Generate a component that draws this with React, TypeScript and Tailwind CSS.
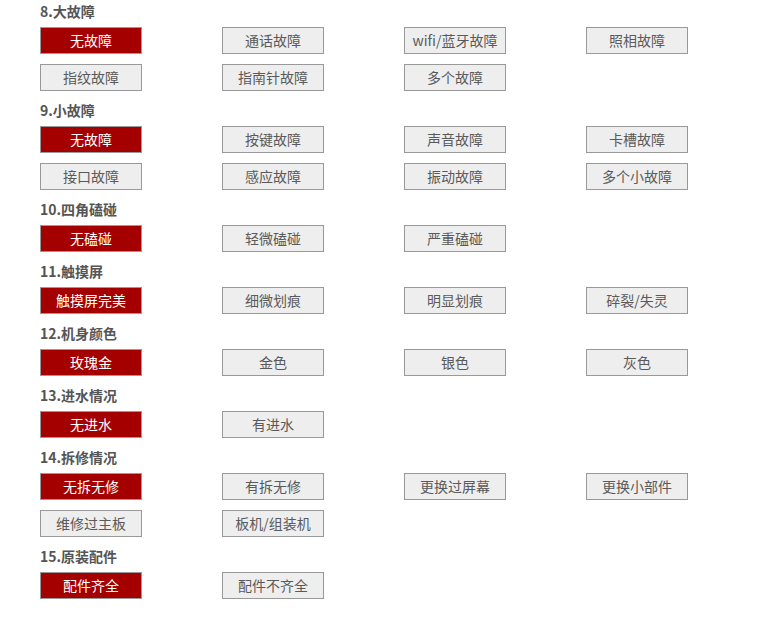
import React from "react";

type Section = {
  title: string;
  options: string[];
};

const sections: Section[] = [
  {
    title: "8.大故障",
    options: ["无故障", "通话故障", "wifi/蓝牙故障", "照相故障", "指纹故障", "指南针故障", "多个故障"],
  },
  {
    title: "9.小故障",
    options: ["无故障", "按键故障", "声音故障", "卡槽故障", "接口故障", "感应故障", "振动故障", "多个小故障"],
  },
  { title: "10.四角磕碰", options: ["无磕碰", "轻微磕碰", "严重磕碰"] },
  { title: "11.触摸屏", options: ["触摸屏完美", "细微划痕", "明显划痕", "碎裂/失灵"] },
  { title: "12.机身颜色", options: ["玫瑰金", "金色", "银色", "灰色"] },
  { title: "13.进水情况", options: ["无进水", "有进水"] },
  {
    title: "14.拆修情况",
    options: ["无拆无修", "有拆无修", "更换过屏幕", "更换小部件", "维修过主板", "板机/组装机"],
  },
  { title: "15.原装配件", options: ["配件齐全", "配件不齐全"] },
];

function OptionButton({ label, active }: { label: string; active: boolean }) {
  return (
    <button
      type="button"
      className={
        active
          ? "h-[27px] w-[102px] border border-[#999999] bg-[#a40000] text-[14px] leading-[25px] text-white"
          : "h-[27px] w-[102px] border border-[#999999] bg-[#eeeeee] text-[14px] leading-[25px] text-[#5a5a5a]"
      }
    >
      {label}
    </button>
  );
}

export default function App() {
  return (
    <div
      className="min-h-[626px] w-[768px] bg-white pl-[40px] pt-[2px]"
      style={{ fontFamily: '"Microsoft YaHei", "Noto Sans CJK SC", sans-serif' }}
    >
      {sections.map((section) => (
        <div key={section.title}>
          <div className="h-[25px] text-[14px] font-bold leading-[19px] text-[#555555]">
            {section.title}
          </div>
          <div className="grid grid-cols-[repeat(4,102px)] gap-x-[80px] gap-y-[10px] pb-[10px]">
            {section.options.map((opt, i) => (
              <OptionButton key={opt + i} label={opt} active={i === 0} />
            ))}
          </div>
        </div>
      ))}
    </div>
  );
}
